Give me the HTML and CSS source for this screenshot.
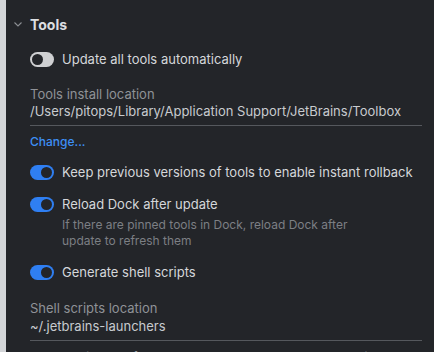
FILE: index.html
```html
<!DOCTYPE html>
<html lang="en">
<head>
    <meta charset="UTF-8">
    <meta name="viewport" content="width=device-width, initial-scale=1.0">
    <title>Toolbox Settings</title>
    <link rel="stylesheet" href="styles.css">
</head>
<body>
    <div class="edge"></div>
    <div class="panel">
        <!-- Section header -->
        <div class="section-title">
            <svg class="chevron" width="8" height="5" viewBox="0 0 8 5">
                <path d="M0.5 0.5 L4 4 L7.5 0.5" fill="none" stroke="#8c8f94" stroke-width="1.1"/>
            </svg>
            <span>Tools</span>
        </div>

        <div class="toggle-row first">
            <span class="toggle off"><span class="knob"></span></span>
            <span class="toggle-label">Update all tools automatically</span>
        </div>

        <div class="field">
            <div class="field-label">Tools install location</div>
            <div class="field-value">/Users/pitops/Library/Application Support/JetBrains/Toolbox</div>
        </div>

        <a href="#" class="link">Change...</a>

        <div class="toggle-row keep">
            <span class="toggle on"><span class="knob"></span></span>
            <span class="toggle-label">Keep previous versions of tools to enable instant rollback</span>
        </div>

        <div class="toggle-row reload">
            <span class="toggle on"><span class="knob"></span></span>
            <span class="toggle-label">Reload Dock after update</span>
        </div>
        <p class="description">If there are pinned tools in Dock, reload Dock after<br>update to refresh them</p>

        <div class="toggle-row generate">
            <span class="toggle on"><span class="knob"></span></span>
            <span class="toggle-label">Generate shell scripts</span>
        </div>

        <div class="field shell">
            <div class="field-label">Shell scripts location</div>
            <div class="field-value">~/.jetbrains-launchers</div>
        </div>

        <p class="hint">Select a directory from your PATH to use the generated scripts</p>
    </div>
</body>
</html>
```

FILE: styles.css
```css
/* Page */
body {
    margin: 0;
    height: 352px;
    overflow: hidden;
    display: flex;
    background-color: #232529;
    font-family: Inter, "Noto Sans", sans-serif;
    font-size: 13px;
    color: #d5d7da;
}

/* Light strip on the left edge */
.edge {
    width: 6px;
    flex-shrink: 0;
    background-color: #d3d5d8;
}

.panel {
    flex: 1;
    display: flex;
    flex-direction: column;
    align-items: flex-start;
    padding: 15px 12px 0 24px;
}

/* Header */
.section-title {
    position: relative;
    height: 20px;
    line-height: 20px;
    font-size: 14px;
    font-weight: 700;
    color: #dcdee1;
}

.chevron {
    position: absolute;
    left: -16px;
    top: 7px;
}

/* Toggle rows */
.toggle-row {
    display: flex;
    align-items: center;
    gap: 8px;
    height: 20px;
}

.toggle-row.first { margin-top: 16px; }
.toggle-row.keep { margin-top: 14px; }
.toggle-row.reload { margin-top: 15px; }
.toggle-row.generate { margin-top: 15px; }

.toggle {
    position: relative;
    width: 24px;
    height: 15px;
    border-radius: 8px;
    flex-shrink: 0;
}

.toggle.on { background-color: #2f7ff2; }
.toggle.off { background-color: #cfd0d2; }

.toggle .knob {
    position: absolute;
    top: 2px;
    width: 11px;
    height: 11px;
    border-radius: 50%;
    background-color: #232529;
}

.toggle.on .knob { right: 2px; }
.toggle.off .knob { left: 2px; }

.toggle-label {
    line-height: 17px;
    color: #d5d7da;
}

/* Location fields */
.field {
    align-self: stretch;
    margin-top: 18px;
    padding-bottom: 5px;
    border-bottom: 1px solid #55585d;
}

.field.shell {
    margin-top: 19px;
}

.field.shell .field-value {
    margin-top: 1px;
}

.field-label {
    line-height: 17px;
    color: #8f9297;
}

.field-value {
    line-height: 17px;
    color: #c8cbcf;
}

/* Link */
.link {
    margin-top: 8px;
    font-size: 12px;
    line-height: 16px;
    font-weight: 500;
    color: #3d8ff5;
    text-decoration: none;
}

/* Small text */
.description {
    margin: 4px 0 0 32px;
    font-size: 12px;
    line-height: 16px;
    color: #7c7f84;
}

.hint {
    margin: 8px 0 0 0;
    font-size: 12px;
    line-height: 16px;
    color: #8f9297;
}
```
